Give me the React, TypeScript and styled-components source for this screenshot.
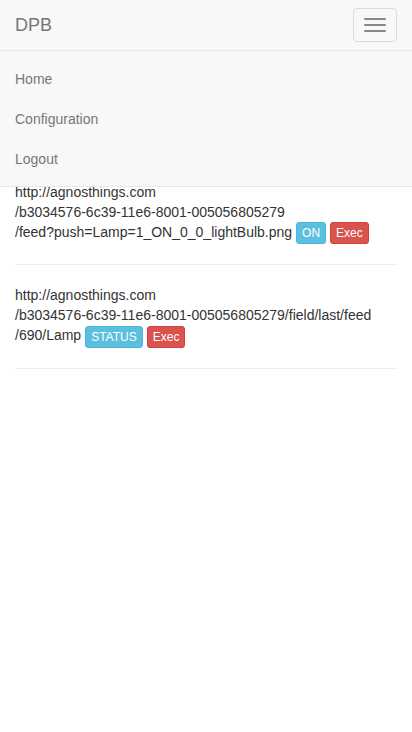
import React from "react";
import styled, { createGlobalStyle } from "styled-components";

const Global = createGlobalStyle`
  html, body { margin: 0; padding: 0; background: #fff; }
  body {
    font-family: "Liberation Sans", Arial, Helvetica, sans-serif;
    font-size: 14px;
    line-height: 20px;
    color: #333;
  }
  * { box-sizing: border-box; }
`;

const Navbar = styled.nav`
  position: fixed;
  top: 0;
  left: 0;
  right: 0;
  z-index: 10;
  background: #f8f8f8;
  border-bottom: 1px solid #e7e7e7;
`;

const Header = styled.div`
  display: flex;
  align-items: flex-start;
  justify-content: space-between;
  height: 50px;
`;

const Brand = styled.a`
  display: block;
  padding: 15px;
  font-size: 18px;
  line-height: 20px;
  height: 50px;
  color: #777;
  text-decoration: none;
`;

const Toggle = styled.button`
  display: flex;
  flex-direction: column;
  gap: 4px;
  margin: 8px 15px 0 0;
  padding: 9px 10px;
  background: transparent;
  border: 1px solid #ddd;
  border-radius: 4px;
`;

const Bar = styled.span`
  display: block;
  width: 22px;
  height: 2px;
  border-radius: 1px;
  background: #888;
`;

const Collapse = styled.div`
  border-top: 1px solid #e7e7e7;
  box-shadow: inset 0 1px 0 rgba(255, 255, 255, 0.1);
`;

const Menu = styled.ul`
  list-style: none;
  margin: 7.5px 0;
  padding: 0;
`;

const MenuLink = styled.a`
  display: block;
  padding: 10px 15px;
  line-height: 20px;
  color: #777;
  text-decoration: none;
`;

const Content = styled.main`
  padding: 182px 15px 0;
`;

const Entry = styled.div`
  line-height: 20px;
`;

const Rule = styled.hr`
  margin: 20px 0;
  border: 0;
  border-top: 1px solid #eee;
`;

const Btn = styled.button<{ $kind: "info" | "danger" }>`
  display: inline-block;
  vertical-align: middle;
  margin-left: 4px;
  padding: 1px 5px;
  font-family: inherit;
  font-size: 12px;
  line-height: 18px;
  border-radius: 3px;
  color: #fff;
  background: ${(p) => (p.$kind === "info" ? "#5bc0de" : "#d9534f")};
  border: 1px solid ${(p) => (p.$kind === "info" ? "#46b8da" : "#d43f3a")};
`;

export default function App() {
  return (
    <>
      <Global />
      <Navbar>
        <Header>
          <Brand href="#">DPB</Brand>
          <Toggle aria-label="Toggle navigation">
            <Bar />
            <Bar />
            <Bar />
          </Toggle>
        </Header>
        <Collapse>
          <Menu>
            <li><MenuLink href="#">Home</MenuLink></li>
            <li><MenuLink href="#">Configuration</MenuLink></li>
            <li><MenuLink href="#">Logout</MenuLink></li>
          </Menu>
        </Collapse>
      </Navbar>
      <Content>
        <Entry>
          http://agnosthings.com
          <br />
          /b3034576-6c39-11e6-8001-005056805279
          <br />
          /feed?push=Lamp=1_ON_0_0_lightBulb.png
          <Btn $kind="info">ON</Btn>
          <Btn $kind="danger">Exec</Btn>
        </Entry>
        <Rule />
        <Entry>
          http://agnosthings.com
          <br />
          /b3034576-6c39-11e6-8001-005056805279/field/last/feed
          <br />
          /690/Lamp
          <Btn $kind="info">STATUS</Btn>
          <Btn $kind="danger">Exec</Btn>
        </Entry>
        <Rule />
      </Content>
    </>
  );
}
